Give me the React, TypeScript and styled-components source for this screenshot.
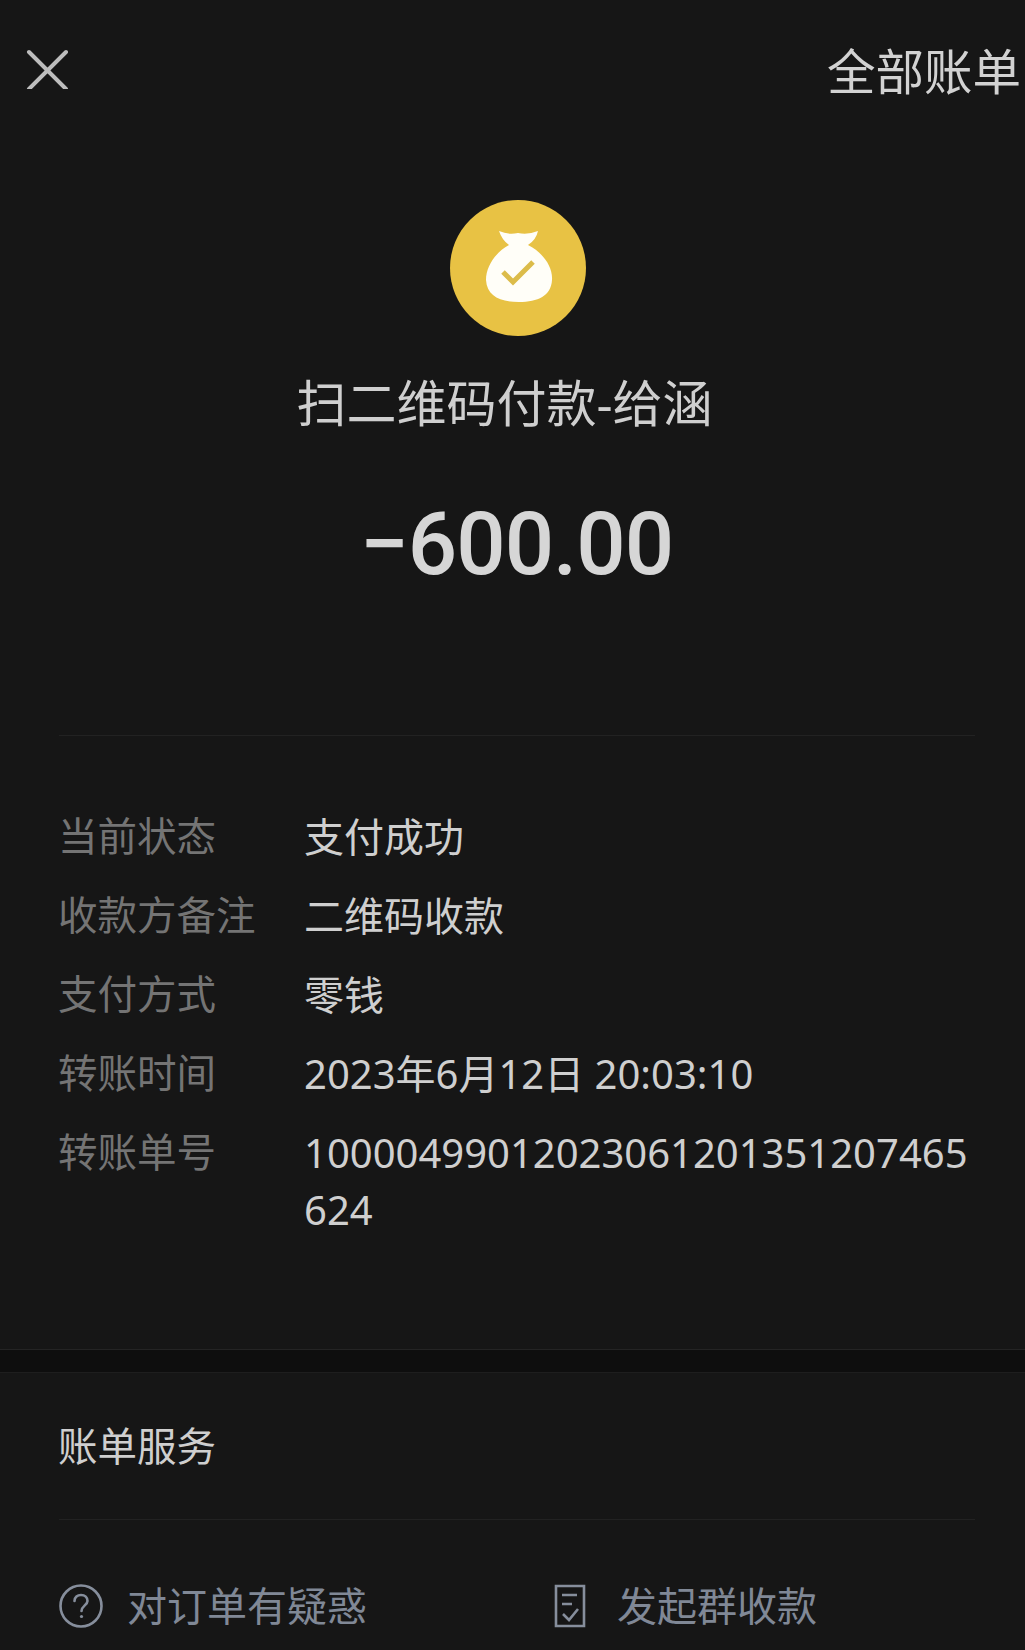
import React from "react";
import styled, { createGlobalStyle } from "styled-components";

const Global = createGlobalStyle`
  html, body { margin: 0; padding: 0; background: #161616; }
  * { box-sizing: border-box; }
`;

const Page = styled.div`
  width: 1025px;
  height: 1650px;
  overflow: hidden;
  background: #161616;
  font-family: "Noto Sans", "Noto Sans CJK SC", sans-serif;
  font-weight: 400;
  color: #cfcfcf;
`;

const TopBar = styled.header`
  height: 142px;
  padding: 42px 4px 0 26px;
  display: flex;
  justify-content: space-between;
  align-items: flex-start;
`;

const CloseSvg = styled.svg`
  margin-top: 3px;
  display: block;
`;

const AllBills = styled.span`
  font-size: 48.5px;
  line-height: 58px;
  color: #d2d2d2;
`;

const Hero = styled.section`
  height: 535px;
  margin-top: 58px;
  display: flex;
  flex-direction: column;
  align-items: center;
`;

const Badge = styled.svg`
  width: 136px;
  height: 136px;
  display: block;
  margin-left: 11px;
`;

const Title = styled.h1`
  margin: 34px 16px 0 0;
  font-size: 50px;
  line-height: 66px;
  font-weight: 400;
  color: #cfcfcf;
`;

const Amount = styled.div`
  margin: 58px 0 0 8px;
  font-family: Roboto, "Noto Sans", sans-serif;
  font-size: 87px;
  line-height: 100px;
  font-weight: 500;
  letter-spacing: -1px;
  color: #d6d6d6;
`;

const Rule = styled.div`
  height: 1px;
  margin: 0 50px 0 59px;
  background: #222;
`;

const Details = styled.dl`
  margin: 0;
  padding: 72px 55px 0 58px;
  display: grid;
  grid-template-columns: 246px 1fr;
  row-gap: 22px;
  height: 613px;
  align-content: start;
`;

const Label = styled.dt`
  font-size: 39.5px;
  line-height: 57px;
  color: #747474;
`;

const Value = styled.dd`
  margin: 0;
  font-size: 40px;
  line-height: 57px;
  color: #cfcfcf;
  word-break: break-all;
`;

const Band = styled.div`
  height: 24px;
  background: #0e0e0e;
  border-top: 1px solid #242424;
  border-bottom: 1px solid #1e1e1e;
`;

const ServiceTitle = styled.h2`
  margin: 0;
  height: 146px;
  padding: 43px 0 0 58px;
  font-size: 39.5px;
  line-height: 60px;
  font-weight: 400;
  color: #cfcfcf;
`;

const Actions = styled.nav`
  display: grid;
  grid-template-columns: 495px 1fr;
  padding: 63px 0 0 59px;
`;

const Action = styled.div<{ $gap: number }>`
  display: flex;
  align-items: center;
  gap: ${(p) => p.$gap}px;
  height: 46px;
  font-size: 40px;
  line-height: 46px;
  color: #808896;
`;

const CloseIcon = () => (
  <CloseSvg width="44" height="44" viewBox="0 0 44 44" fill="none" stroke="#bdbdbd" strokeWidth="4" strokeLinecap="round">
    <path d="M3 7 L40 44 M40 7 L3 44" />
  </CloseSvg>
);

const BagBadge = () => (
  <Badge viewBox="0 0 136 136">
    <circle cx="68" cy="68" r="68" fill="#e8c244" />
    <path
      fill="#fffef8"
      d="M49 31 Q58 35 68 33 Q78 35 88 31 Q86 40 78 45 C92 52 103 66 102 80 C101 96 88 102 69 102 C50 102 37 96 36 80 C36 66 46 52 59 45 Q52 40 49 31 Z"
    />
    <path d="M53 72 L63 82 L83 62" fill="none" stroke="#dcbc4a" strokeWidth="5" />
  </Badge>
);

const QuestionIcon = () => (
  <svg width="44" height="46" viewBox="0 0 44 46" fill="none" stroke="#868e9c" strokeWidth="2.6">
    <circle cx="22" cy="23" r="20.5" />
    <path d="M15.5 18 C15.5 14 18.5 12 22 12 C26 12 28.5 14.5 28.5 18 C28.5 22 22.5 23 22.5 28" strokeLinecap="round" />
    <circle cx="22.5" cy="33.5" r="1.6" fill="#868e9c" stroke="none" />
  </svg>
);

const BillIcon = () => (
  <svg width="32" height="44" viewBox="0 0 32 44" fill="none" stroke="#868e9c" strokeWidth="2.6">
    <path d="M2 2 H30 V42 H2 Z" />
    <path d="M8 11 H23 M8 20 H18" />
    <path d="M9 30 L15 36 L24 25" />
  </svg>
);

export default function App() {
  return (
    <Page>
      <Global />
      <TopBar>
        <CloseIcon />
        <AllBills>全部账单</AllBills>
      </TopBar>
      <Hero>
        <BagBadge />
        <Title>扫二维码付款-给涵</Title>
        <Amount>−600.00</Amount>
      </Hero>
      <Rule />
      <Details>
        <Label>当前状态</Label>
        <Value>支付成功</Value>
        <Label>收款方备注</Label>
        <Value>二维码收款</Value>
        <Label>支付方式</Label>
        <Value>零钱</Value>
        <Label>转账时间</Label>
        <Value>2023年6月12日 20:03:10</Value>
        <Label>转账单号</Label>
        <Value>10000499012023061201351207465624</Value>
      </Details>
      <Band />
      <ServiceTitle>账单服务</ServiceTitle>
      <Rule />
      <Actions>
        <Action $gap={24}>
          <QuestionIcon />
          对订单有疑惑
        </Action>
        <Action $gap={31}>
          <BillIcon />
          发起群收款
        </Action>
      </Actions>
    </Page>
  );
}
